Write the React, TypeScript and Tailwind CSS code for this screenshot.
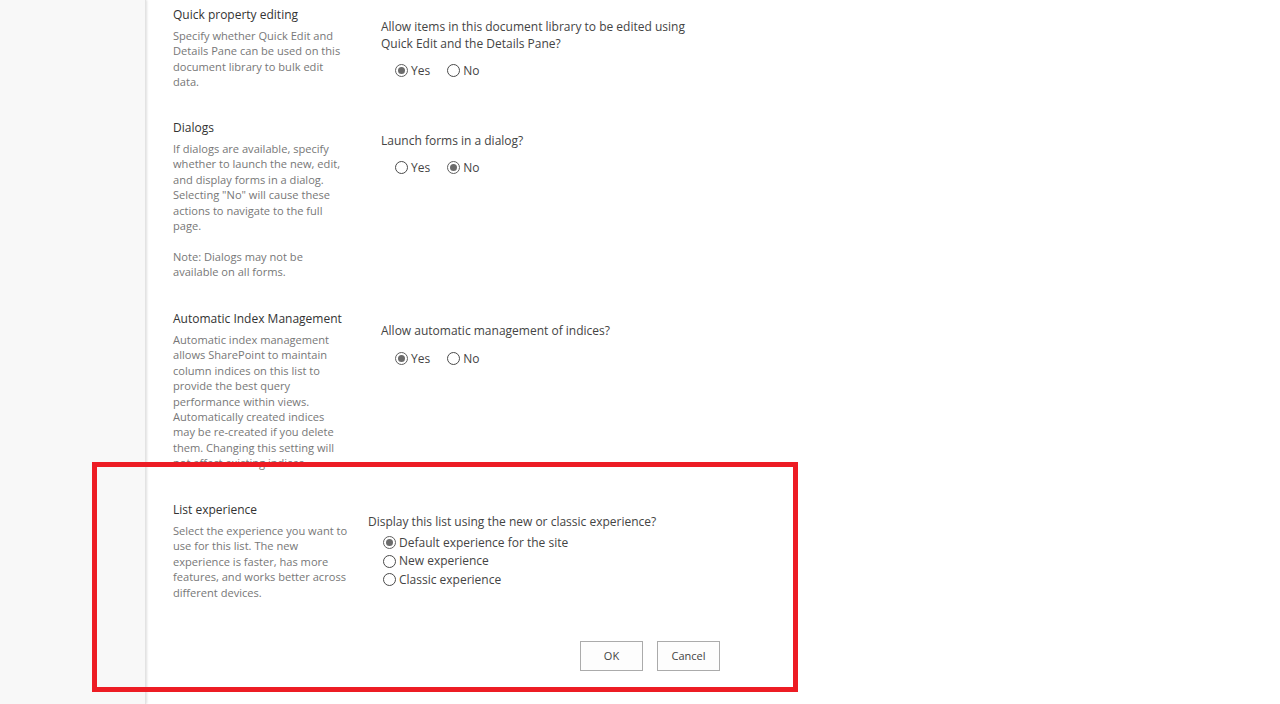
import React from "react";

const font = { fontFamily: '"Open Sans", "Liberation Sans", sans-serif' };

function Radio({ checked, label }: { checked?: boolean; label: string }) {
  return (
    <span className="inline-flex items-center h-[18px]">
      <span
        className={
          "w-[13px] h-[13px] rounded-full border bg-white flex items-center justify-center shrink-0 " +
          (checked ? "border-[#5f5f5f]" : "border-[#4a4a4a]")
        }
      >
        {checked && <span className="w-[7px] h-[7px] rounded-full bg-[#6b6b6b]" />}
      </span>
      <span className="ml-[3px]">{label}</span>
    </span>
  );
}

function Section({
  title,
  desc,
  children,
  h,
  rightPl,
}: {
  title: string;
  desc: React.ReactNode;
  children: React.ReactNode;
  h?: string;
  rightPl: string;
}) {
  return (
    <div className={"flex " + (h ?? "")}>
      <div className="w-[234px] pl-[27px] shrink-0">
        <div className="pt-[1px] text-[12px] leading-[18px] text-[#333]">{title}</div>
        <div className="mt-[4px] text-[11.1px] leading-[15.4px] text-[#777] whitespace-nowrap">{desc}</div>
      </div>
      <div className={"pt-[13px] text-[12px] leading-[17px] text-[#444] " + rightPl}>{children}</div>
    </div>
  );
}

export default function App() {
  return (
    <div className="relative w-[1280px] h-[704px] overflow-hidden bg-white flex" style={font}>
      <div className="w-[146px] h-full bg-[#f8f8f8] shrink-0 shadow-[1px_0_2px_rgba(0,0,0,0.12)] border-r border-[#e3e3e3]" />
      <div className="flex-1 pt-[5px]">
        <Section
          h="h-[113px]"
          rightPl="pl-[1px]"
          title="Quick property editing"
          desc={
            <>
              Specify whether Quick Edit and<br />
              Details Pane can be used on this<br />
              document library to bulk edit<br />
              data.
            </>
          }
        >
          <div>
            Allow items in this document library to be edited using
            <br />
            Quick Edit and the Details Pane?
          </div>
          <div className="mt-[9.5px] pl-[14px] flex gap-[17px]">
            <Radio checked label="Yes" />
            <Radio label="No" />
          </div>
        </Section>
        <Section
          h="h-[191px]"
          rightPl="pl-[1px]"
          title="Dialogs"
          desc={
            <>
              If dialogs are available, specify<br />
              whether to launch the new, edit,<br />
              and display forms in a dialog.<br />
              Selecting "No" will cause these<br />
              actions to navigate to the full<br />
              page.<br />
              <br />
              Note: Dialogs may not be<br />
              available on all forms.
            </>
          }
        >
          <div className="pt-[1px]">Launch forms in a dialog?</div>
          <div className="mt-[9.5px] pl-[14px] flex gap-[17px]">
            <Radio label="Yes" />
            <Radio checked label="No" />
          </div>
        </Section>
        <Section
          h="h-[191px]"
          rightPl="pl-[1px]"
          title="Automatic Index Management"
          desc={
            <>
              Automatic index management<br />
              allows SharePoint to maintain<br />
              column indices on this list to<br />
              provide the best query<br />
              performance within views.<br />
              Automatically created indices<br />
              may be re-created if you delete<br />
              them. Changing this setting will<br />
              not affect existing indices.
            </>
          }
        >
          <div>Allow automatic management of indices?</div>
          <div className="mt-[10.5px] pl-[14px] flex gap-[17px]">
            <Radio checked label="Yes" />
            <Radio label="No" />
          </div>
        </Section>
        <Section
          rightPl="-ml-[12px]"
          title="List experience"
          desc={
            <>
              Select the experience you want to<br />
              use for this list. The new<br />
              experience is faster, has more<br />
              features, and works better across<br />
              different devices.
            </>
          }
        >
          <div>Display this list using the new or classic experience?</div>
          <div className="mt-[3.5px] pl-[15px] flex flex-col leading-[18.5px]">
            <span className="h-[18.5px] flex items-center"><Radio checked label="Default experience for the site" /></span>
            <span className="h-[18.5px] flex items-center"><Radio label="New experience" /></span>
            <span className="h-[18.5px] flex items-center"><Radio label="Classic experience" /></span>
          </div>
        </Section>
        <div className="w-[574px] flex justify-end gap-[14px] mt-[41px]">
          <button className="w-[63px] h-[30px] border border-[#ababab] bg-[#fdfdfd] text-[11px] text-[#444]">OK</button>
          <button className="w-[63px] h-[30px] border border-[#ababab] bg-[#fdfdfd] text-[11px] text-[#444]">Cancel</button>
        </div>
      </div>
      <div className="absolute left-[92px] top-[462px] w-[706px] h-[230px] border-[5px] border-[#ed1c24] pointer-events-none" />
    </div>
  );
}
